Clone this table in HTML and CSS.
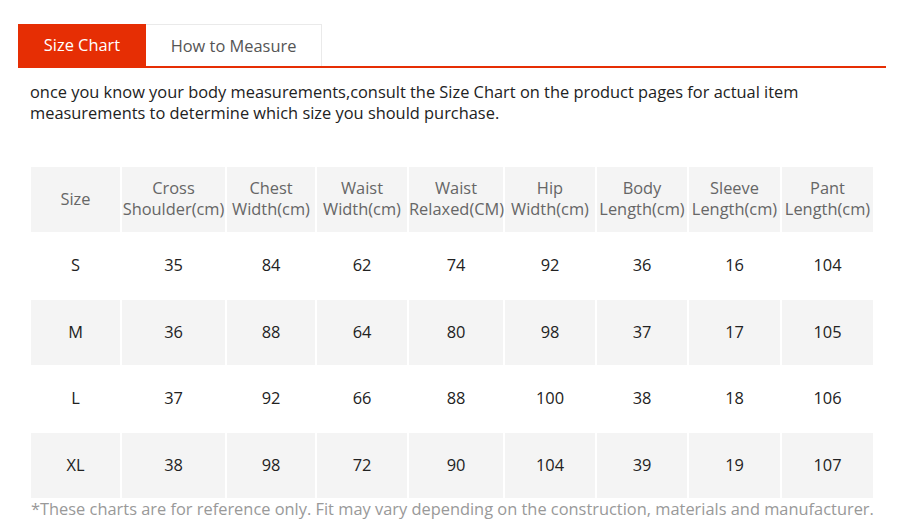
FILE: index.html
```html
<!DOCTYPE html>
<html>
<head>
<meta charset="utf-8">
<link rel="stylesheet" href="styles.css">
</head>
<body>
<div class="wrap">
  <div class="tabs">
    <div class="tab active">Size Chart</div>
    <div class="tab">How to Measure</div>
  </div>
  <p class="intro">once you know your body measurements,consult the Size Chart on the product pages for actual item measurements to determine which size you should purchase.</p>
  <table class="chart">
    <colgroup>
      <col class="c1"><col class="c2"><col class="c3"><col class="c4"><col class="c5"><col class="c6"><col class="c7"><col class="c8"><col class="c9">
    </colgroup>
    <tr class="head">
      <td>Size</td>
      <td>Cross<br>Shoulder(cm)</td>
      <td>Chest<br>Width(cm)</td>
      <td>Waist<br>Width(cm)</td>
      <td>Waist<br>Relaxed(CM)</td>
      <td>Hip<br>Width(cm)</td>
      <td>Body<br>Length(cm)</td>
      <td>Sleeve<br>Length(cm)</td>
      <td>Pant<br>Length(cm)</td>
    </tr>
    <tr>
      <td>S</td><td>35</td><td>84</td><td>62</td><td>74</td><td>92</td><td>36</td><td>16</td><td>104</td>
    </tr>
    <tr class="alt">
      <td>M</td><td>36</td><td>88</td><td>64</td><td>80</td><td>98</td><td>37</td><td>17</td><td>105</td>
    </tr>
    <tr>
      <td>L</td><td>37</td><td>92</td><td>66</td><td>88</td><td>100</td><td>38</td><td>18</td><td>106</td>
    </tr>
    <tr class="alt">
      <td>XL</td><td>38</td><td>98</td><td>72</td><td>90</td><td>104</td><td>39</td><td>19</td><td>107</td>
    </tr>
  </table>
  <p class="note">*These charts are for reference only. Fit may vary depending on the construction, materials and manufacturer.</p>
</div>
</body>
</html>
```

FILE: styles.css
```css
html, body {
  margin: 0;
  padding: 0;
  background: #fff;
}
body {
  font-family: "Open Sans", "Liberation Sans", sans-serif;
  font-size: 16.4px;
  color: #333;
}
.wrap {
  padding: 24px 14px 0 18px;
}
.tabs {
  display: flex;
  width: 868px;
  border-bottom: 2px solid #e62e04;
}
.tab {
  height: 42px;
  padding-bottom: 1px;
  display: flex;
  align-items: center;
  justify-content: center;
  box-sizing: border-box;
  color: #555;
  font-size: 16.4px;
}
.tab.active {
  width: 128px;
  background: #e62e04;
  color: #fff;
}
.tab:not(.active) {
  width: 176px;
  border-top: 1px solid #eaeaea;
  border-right: 1px solid #eaeaea;
}
.intro {
  margin: 13px 0 0 12px;
  line-height: 21px;
  color: #222;
}
.chart {
  margin: 42px 0 0 11px;
  border-collapse: separate;
  border-spacing: 2px;
  table-layout: fixed;
  width: 846px;
  font-size: 16.4px;
}
.c1 { width: 89px; }
.c2 { width: 103px; }
.c3 { width: 88px; }
.c4 { width: 90px; }
.c5 { width: 94px; }
.c6 { width: 90px; }
.c7 { width: 90px; }
.c8 { width: 91px; }
.c9 { width: 91px; }
.chart td {
  height: 64.5px;
  padding: 0 0 2px;
  text-align: center;
  vertical-align: middle;
  line-height: 21px;
  color: #222;
  white-space: nowrap;
  box-sizing: border-box;
}
.chart .head td {
  background: #f4f4f4;
  color: #666;
}
.chart .alt td {
  background: #f4f4f4;
}
.note {
  margin: -1px 0 0 13px;
  line-height: 20px;
  color: #999;
}
```
